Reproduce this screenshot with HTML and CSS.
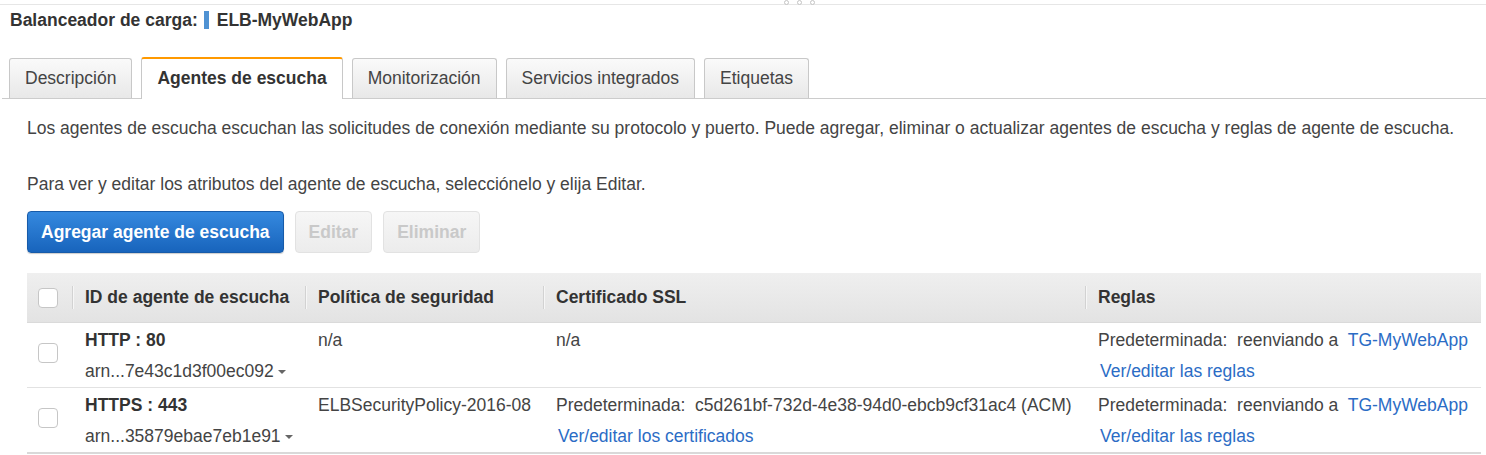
FILE: index.html
```html
<!DOCTYPE html>
<html lang="es">
<head>
<meta charset="utf-8">
<title>Balanceador de carga</title>
<link rel="stylesheet" href="styles.css">
</head>
<body>
<div class="topbar">
  <div class="handle"><span></span><span></span><span></span></div>
</div>
<div class="title">
  <span class="label">Balanceador de carga:</span>
  <span class="bar"></span>
  <span class="name">ELB-MyWebApp</span>
</div>
<div class="tabs">
  <div class="tab">Descripción</div>
  <div class="tab active">Agentes de escucha</div>
  <div class="tab">Monitorización</div>
  <div class="tab">Servicios integrados</div>
  <div class="tab">Etiquetas</div>
</div>
<div class="content">
  <p class="intro">Los agentes de escucha escuchan las solicitudes de conexión mediante su protocolo y puerto. Puede agregar, eliminar o actualizar agentes de escucha y reglas de agente de escucha.</p>
  <p class="intro second">Para ver y editar los atributos del agente de escucha, selecciónelo y elija Editar.</p>
  <div class="actions">
    <button class="btn primary">Agregar agente de escucha</button>
    <button class="btn disabled">Editar</button>
    <button class="btn disabled">Eliminar</button>
  </div>
  <div class="table">
    <div class="row head">
      <div class="cell chk"><span class="checkbox"></span></div>
      <div class="cell"><span class="sep"></span>ID de agente de escucha</div>
      <div class="cell"><span class="sep"></span>Política de seguridad</div>
      <div class="cell"><span class="sep"></span>Certificado SSL</div>
      <div class="cell"><span class="sep"></span>Reglas</div>
    </div>
    <div class="row body">
      <div class="cell chk"><span class="checkbox"></span></div>
      <div class="cell">
        <div class="strong">HTTP : 80</div>
        <div>arn...7e43c1d3f00ec092<span class="caret"></span></div>
      </div>
      <div class="cell"><div>n/a</div></div>
      <div class="cell"><div>n/a</div></div>
      <div class="cell">
        <div>Predeterminada:&nbsp; reenviando a&nbsp; <a class="link">TG-MyWebApp</a></div>
        <div class="indent"><a class="link">Ver/editar las reglas</a></div>
      </div>
    </div>
    <div class="row body last">
      <div class="cell chk"><span class="checkbox"></span></div>
      <div class="cell">
        <div class="strong">HTTPS : 443</div>
        <div>arn...35879ebae7eb1e91<span class="caret"></span></div>
      </div>
      <div class="cell"><div>ELBSecurityPolicy-2016-08</div></div>
      <div class="cell">
        <div>Predeterminada:&nbsp; c5d261bf-732d-4e38-94d0-ebcb9cf31ac4 (ACM)</div>
        <div class="indent"><a class="link">Ver/editar los certificados</a></div>
      </div>
      <div class="cell">
        <div>Predeterminada:&nbsp; reenviando a&nbsp; <a class="link">TG-MyWebApp</a></div>
        <div class="indent"><a class="link">Ver/editar las reglas</a></div>
      </div>
    </div>
  </div>
</div>
</body>
</html>
```

FILE: styles.css
```css
* { box-sizing: border-box; }
html, body { margin: 0; padding: 0; background: #fff; }
body {
  font-family: "Liberation Sans", Arial, sans-serif;
  font-size: 17.5px;
  color: #444;
  width: 1486px;
  height: 455px;
  overflow: hidden;
}
.topbar {
  position: relative;
  height: 5px;
  border-bottom: 1px solid #e6e6e6;
}
.handle {
  position: absolute;
  left: 784px;
  top: 0;
  display: flex;
  gap: 8px;
}
.handle span {
  width: 5px;
  height: 5px;
  border: 1px solid #c4c4c4;
  border-radius: 50%;
  background: #fff;
}
.title {
  display: flex;
  align-items: center;
  height: 20px;
  margin-top: 5px;
  padding-left: 10px;
  font-weight: bold;
  color: #333;
}
.title .bar {
  display: inline-block;
  width: 5px;
  height: 18px;
  background: #4f92d3;
  margin: 0 8px 0 6px;
}
.tabs {
  display: flex;
  align-items: flex-end;
  gap: 9px;
  margin-top: 27px;
  margin-left: 2px;
  padding-left: 7px;
  border-bottom: 1px solid #cccccc;
  height: 42px;
}
.tab {
  height: 40px;
  line-height: 38px;
  padding: 0 15px;
  border: 1px solid #c8c8c8;
  border-bottom: none;
  border-radius: 3px 3px 0 0;
  background: linear-gradient(#fafafa, #e8e8e8);
  color: #444;
}
.tab.active {
  height: 42px;
  margin-bottom: -1px;
  border-top: 2px solid #f90;
  background: #fff;
  font-weight: bold;
  color: #333;
  line-height: 38px;
}
.content {
  padding: 0 5px 0 27px;
}
.intro {
  margin: 19px 0 0;
  line-height: 20px;
}
.intro.second {
  margin-top: 36px;
}
.actions {
  display: flex;
  gap: 11px;
  margin-top: 17px;
}
.btn {
  font-family: inherit;
  font-size: 17.5px;
  font-weight: bold;
  height: 42px;
  padding: 0 13px;
  border-radius: 4px;
  cursor: default;
}
.btn.primary {
  color: #fff;
  background: linear-gradient(#3589df, #1864bc);
  border: 1px solid #175ba9;
  box-shadow: 0 1px 1px rgba(0,0,0,0.2);
}
.btn.disabled {
  color: #c9c9c9;
  background: linear-gradient(#f6f6f6, #ececec);
  border: 1px solid #e2e2e2;
}
.table {
  margin-top: 20px;
  width: 1454px;
}
.row {
  display: grid;
  grid-template-columns: 45px 233px 238px 542px 396px;
}
.row.head {
  height: 50px;
  background: linear-gradient(#efefef, #e3e3e3);
  border-bottom: 1px solid #dadada;
  font-weight: bold;
  color: #333;
}
.row.head .cell {
  position: relative;
  display: flex;
  align-items: center;
  padding-left: 13px;
}
.row.head .cell.chk {
  padding-left: 11px;
}
.sep {
  position: absolute;
  left: 0;
  top: 13px;
  width: 1px;
  height: 23px;
  background: #d2d2d2;
  box-shadow: 1px 0 0 #f6f6f6;
}
.row.body {
  padding: 2px 0 0;
  border-bottom: 1px solid #e2e2e2;
  line-height: 31px;
}
.row.body.last {
  border-bottom: 2px solid #d9d9d9;
}
.row.body .cell {
  padding-left: 13px;
  white-space: nowrap;
}
.row.body .cell.chk {
  padding-left: 11px;
  padding-top: 18px;
}
.checkbox {
  display: block;
  width: 20px;
  height: 20px;
  border: 1px solid #c6c6c6;
  border-radius: 4px;
  background: #fff;
}
.strong {
  font-weight: bold;
  color: #333;
}
.caret {
  display: inline-block;
  width: 0;
  height: 0;
  margin-left: 4px;
  vertical-align: middle;
  border-left: 4px solid transparent;
  border-right: 4px solid transparent;
  border-top: 4px solid #666;
}
.link {
  color: #2b6cc5;
  text-decoration: none;
}
.indent {
  padding-left: 2px;
}
```
